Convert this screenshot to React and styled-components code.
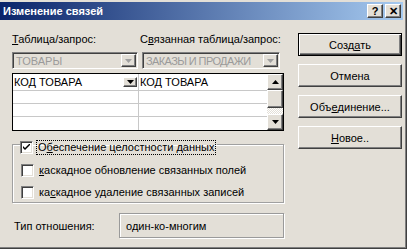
import React from "react";
import styled, { createGlobalStyle } from "styled-components";

const face = "#E3DFD7";

const GlobalStyle = createGlobalStyle`
  html, body { margin: 0; padding: 0; background: ${face}; }
  body { font-family: "Liberation Sans", Arial, sans-serif; font-size: 11px; color: #000; }
  * { box-sizing: border-box; }
`;

const Window = styled.div`
  width: 407px;
  height: 249px;
  background: ${face};
  border-right: 1px solid #404040;
  border-bottom: 1px solid #404040;
  box-shadow: inset -1px -1px 0 #808080;
  display: flex;
  flex-direction: column;
  overflow: hidden;
`;

const TitleBar = styled.div`
  height: 18px;
  margin: 2px 3px 0 0;
  padding: 0 2px 0 3px;
  display: flex;
  align-items: center;
  justify-content: space-between;
  background: linear-gradient(to right, #0A246A, #A6CAF0);
  color: #fff;
  font-weight: bold;
  font-size: 11px;
`;

const TitleButtons = styled.div`
  display: flex;
  gap: 2px;
`;

const raised = `
  background: ${face};
  border: 1px solid;
  border-color: #fff #404040 #404040 #fff;
  box-shadow: inset -1px -1px 0 #808080;
`;

const TitleButton = styled.div`
  ${raised}
  width: 16px;
  height: 14px;
  display: flex;
  align-items: center;
  justify-content: center;
  color: #000;
  font-weight: bold;
  font-size: 11px;
  line-height: 1;
`;

const Body = styled.div`
  display: flex;
  padding-left: 12px;
`;

const LeftColumn = styled.div`
  width: 272px;
  display: flex;
  flex-direction: column;
`;

const RightColumn = styled.div`
  width: 104px;
  margin-left: 14px;
  margin-top: 13px;
  display: flex;
  flex-direction: column;
  gap: 8px;
`;

const Labels = styled.div`
  margin-top: 12px;
  height: 14px;
  display: grid;
  grid-template-columns: 128px 1fr;
  align-items: center;
`;

const U = styled.span`
  text-decoration: underline;
`;

const Combos = styled.div`
  margin-top: 6px;
  height: 17px;
  display: grid;
  grid-template-columns: 126px 138px;
  gap: 4px;
`;

const Combo = styled.div`
  display: flex;
  align-items: center;
  border: 1px solid;
  border-color: #808080 #fff #fff #808080;
  box-shadow: inset 1px 1px 0 #404040;
  padding: 1px 1px 1px 2px;
  color: #9a9a9a;
`;

const ComboText = styled.div`
  flex: 1;
  padding-left: 1px;
  letter-spacing: ${p => (p.$tight ? "-0.6px" : "0")};
  white-space: nowrap;
  overflow: hidden;
`;

const ArrowButton = styled.div`
  ${raised}
  flex: none;
  width: ${p => p.$w || 15}px;
  height: ${p => p.$h || 13}px;
  display: flex;
  align-items: center;
  justify-content: center;
`;

const Arrow = ({ up, color = "#000" }) => (
  <svg width="7" height="4" viewBox="0 0 7 4">
    <path d={up ? "M3.5 0 L7 4 L0 4 Z" : "M0 0 L7 0 L3.5 4 Z"} fill={color} />
  </svg>
);

const Grid = styled.div`
  margin-top: 4px;
  height: 58px;
  border: 1px solid #000;
  background: #fff;
  display: flex;
`;

const Table = styled.div`
  flex: 1;
  display: grid;
  grid-template-columns: 126px 1fr;
  grid-template-rows: 17px 13px 13px 13px;
`;

const Cell = styled.div`
  border-bottom: ${p => (p.$last ? "none" : "1px solid #C8C8C8")};
  border-right: ${p => (p.$first ? "1px solid #C8C8C8" : "none")};
  display: flex;
  align-items: center;
  padding-left: 1px;
  padding-right: 1px;
  text-transform: uppercase;
`;

const CellText = styled.div`
  flex: 1;
`;

const ScrollBar = styled.div`
  width: 16px;
  display: flex;
  flex-direction: column;
`;

const Track = styled.div`
  flex: 1;
  background: repeating-conic-gradient(#fff 0 25%, ${face} 0 50%) 0 0 / 2px 2px;
`;

const Thumb = styled.div`
  ${raised}
  height: 18px;
`;

const Group = styled.fieldset`
  margin: 4px 0 0;
  padding: 0 0 0 8px;
  height: 68px;
  border: 1px solid #A0A0A0;
  box-shadow: inset 1px 1px 0 #fff, 1px 1px 0 #fff;
`;

const Legend = styled.legend`
  padding: 6px 2px 0 0;
  margin-left: -1px;
`;

const CheckRow = styled.label`
  display: flex;
  align-items: center;
  gap: 4px;
  height: 13px;
  margin-top: ${p => p.$gap || 0}px;
`;

const Box = styled.span`
  flex: none;
  width: 13px;
  height: 13px;
  background: #fff;
  border: 1px solid;
  border-color: #808080 #fff #fff #808080;
  box-shadow: inset 1px 1px 0 #404040, inset -1px -1px 0 ${face};
  display: flex;
  align-items: center;
  justify-content: center;
`;

const CheckLabel = styled.span`
  padding: 0 1px;
  outline: ${p => (p.$focus ? "1px dotted #000" : "none")};
  line-height: 13px;
`;

const Check = ({ on }) => (
  <Box>
    {on && (
      <svg width="7" height="7" viewBox="0 0 7 7">
        <path d="M0 2 L2 4 L7 -1 L7 1 L2 6 L0 4 Z" fill="#000" />
      </svg>
    )}
  </Box>
);

const Relation = styled.div`
  margin-top: 10px;
  height: 25px;
  display: grid;
  grid-template-columns: 107px 1fr;
  align-items: center;
`;

const RelationLabel = styled.div`
  padding-left: 2px;
`;

const RelationBox = styled.div`
  height: 25px;
  border: 1px solid #9a9a9a;
  box-shadow: inset 1px 1px 0 #fff, 1px 1px 0 #fff;
  padding-left: 6px;
  display: flex;
  align-items: center;
`;

const Button = styled.div`
  ${raised}
  height: 23px;
  display: flex;
  align-items: center;
  justify-content: center;
  ${p =>
    p.$default &&
    `border: 1px solid #000;
     box-shadow: inset 1px 1px 0 #fff, inset -1px -1px 0 #404040, inset -2px -2px 0 #808080;`}
`;

export default function App() {
  return (
    <>
      <GlobalStyle />
      <Window>
        <TitleBar>
          <span>Изменение связей</span>
          <TitleButtons>
            <TitleButton>?</TitleButton>
            <TitleButton>✕</TitleButton>
          </TitleButtons>
        </TitleBar>
        <Body>
          <LeftColumn>
            <Labels>
              <span><U>Т</U>аблица/запрос:</span>
              <span>С<U>в</U>язанная таблица/запрос:</span>
            </Labels>
            <Combos>
              <Combo>
                <ComboText>ТОВАРЫ</ComboText>
                <ArrowButton $w={15} $h={13}><Arrow color="#a0a0a0" /></ArrowButton>
              </Combo>
              <Combo>
                <ComboText $tight>ЗАКАЗЫ И ПРОДАЖИ</ComboText>
                <ArrowButton $w={15} $h={13}><Arrow color="#a0a0a0" /></ArrowButton>
              </Combo>
            </Combos>
            <Grid>
              <Table>
                <Cell $first>
                  <CellText>Код товара</CellText>
                  <ArrowButton $w={14} $h={10}><Arrow /></ArrowButton>
                </Cell>
                <Cell>Код товара</Cell>
                <Cell $first />
                <Cell />
                <Cell $first />
                <Cell />
                <Cell $first $last />
                <Cell $last />
              </Table>
              <ScrollBar>
                <ArrowButton $w={16} $h={16}><Arrow up /></ArrowButton>
                <Thumb />
                <Track />
                <ArrowButton $w={16} $h={16}><Arrow /></ArrowButton>
              </ScrollBar>
            </Grid>
            <Group>
              <Legend>
                <CheckRow>
                  <Check on />
                  <CheckLabel $focus>О<U>б</U>еспечение целостности данных</CheckLabel>
                </CheckRow>
              </Legend>
              <CheckRow $gap={10}>
                <Check />
                <CheckLabel><U>к</U>аскадное обновление связанных полей</CheckLabel>
              </CheckRow>
              <CheckRow $gap={9}>
                <Check />
                <CheckLabel>ка<U>с</U>кадное удаление связанных записей</CheckLabel>
              </CheckRow>
            </Group>
            <Relation>
              <RelationLabel>Тип отношения:</RelationLabel>
              <RelationBox>один-ко-многим</RelationBox>
            </Relation>
          </LeftColumn>
          <RightColumn>
            <Button $default>Созд<U>а</U>ть</Button>
            <Button>Отмена</Button>
            <Button>Объ<U>е</U>динение...</Button>
            <Button><U>Н</U>овое..</Button>
          </RightColumn>
        </Body>
      </Window>
    </>
  );
}
